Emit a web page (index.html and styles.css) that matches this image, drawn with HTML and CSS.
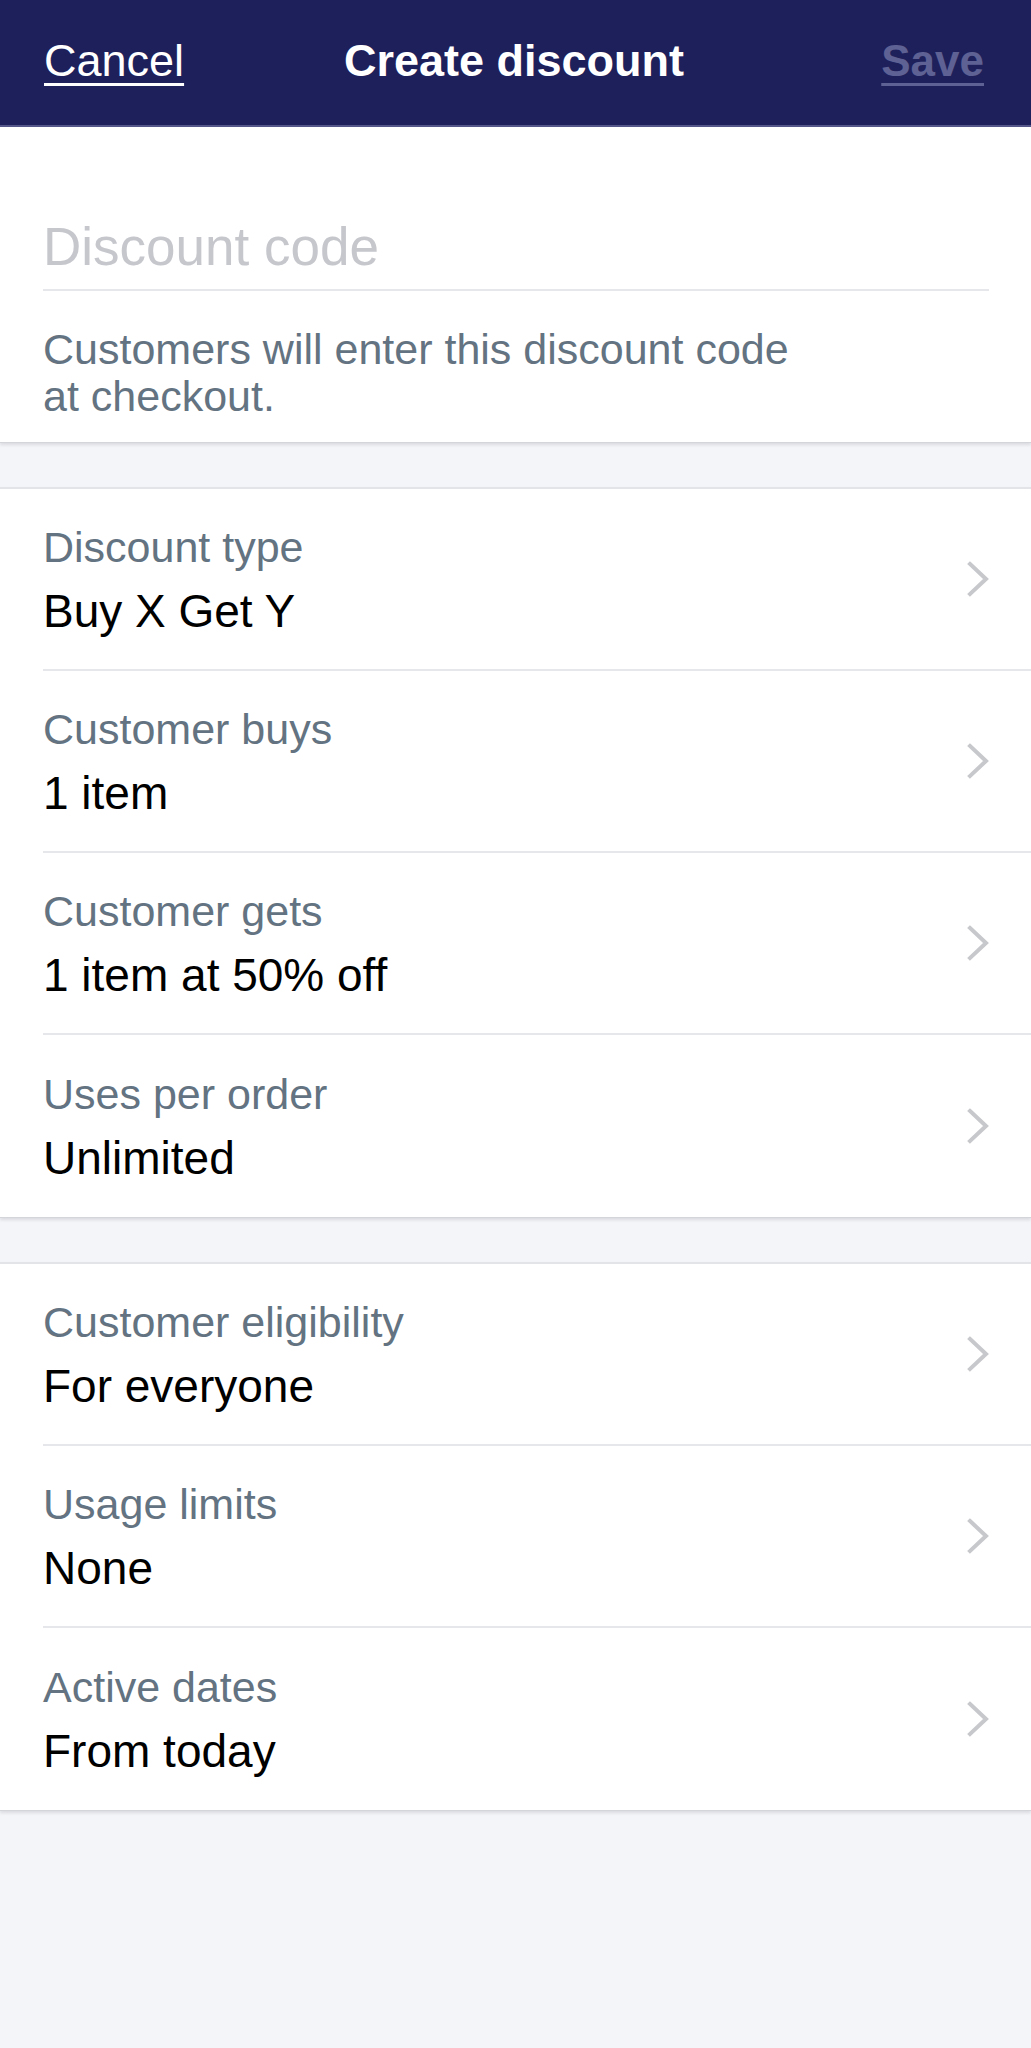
FILE: index.html
```html
<!DOCTYPE html>
<html lang="en">
<head>
<meta charset="utf-8">
<title>Create discount</title>
<link rel="stylesheet" href="styles.css">
</head>
<body>
<header class="topbar">
  <a class="nav-btn cancel" href="#">Cancel</a>
  <h1 class="title">Create discount</h1>
  <a class="nav-btn save" href="#">Save</a>
</header>

<section class="card code-card">
  <div class="code-input">Discount code</div>
  <p class="help">Customers will enter this discount code at checkout.</p>
</section>

<section class="card list">
  <div class="row"><div class="row-inner"><div class="texts"><div class="label">Discount type</div><div class="value">Buy X Get Y</div></div><svg class="chev" viewBox="0 0 22 36"><polyline points="3,3 19,18 3,33"/></svg></div></div>
  <div class="row"><div class="row-inner"><div class="texts"><div class="label">Customer buys</div><div class="value">1 item</div></div><svg class="chev" viewBox="0 0 22 36"><polyline points="3,3 19,18 3,33"/></svg></div></div>
  <div class="row"><div class="row-inner"><div class="texts"><div class="label">Customer gets</div><div class="value">1 item at 50% off</div></div><svg class="chev" viewBox="0 0 22 36"><polyline points="3,3 19,18 3,33"/></svg></div></div>
  <div class="row"><div class="row-inner"><div class="texts"><div class="label">Uses per order</div><div class="value">Unlimited</div></div><svg class="chev" viewBox="0 0 22 36"><polyline points="3,3 19,18 3,33"/></svg></div></div>
</section>

<section class="card list">
  <div class="row"><div class="row-inner"><div class="texts"><div class="label">Customer eligibility</div><div class="value">For everyone</div></div><svg class="chev" viewBox="0 0 22 36"><polyline points="3,3 19,18 3,33"/></svg></div></div>
  <div class="row"><div class="row-inner"><div class="texts"><div class="label">Usage limits</div><div class="value">None</div></div><svg class="chev" viewBox="0 0 22 36"><polyline points="3,3 19,18 3,33"/></svg></div></div>
  <div class="row"><div class="row-inner"><div class="texts"><div class="label">Active dates</div><div class="value">From today</div></div><svg class="chev" viewBox="0 0 22 36"><polyline points="3,3 19,18 3,33"/></svg></div></div>
</section>
</body>
</html>
```

FILE: styles.css
```css
* { box-sizing: border-box; }

html, body {
  margin: 0;
  padding: 0;
}

body {
  background: #f4f5f8;
  font-family: "Liberation Sans", Arial, sans-serif;
  min-height: 2048px;
}

.topbar {
  height: 127px;
  background: #1e205b;
  border-bottom: 2px solid #55578a;
  display: grid;
  grid-template-columns: 1fr auto 1fr;
  align-items: center;
  padding: 0 47px 4px 44px;
}

.nav-btn {
  font-size: 45px;
  text-decoration: underline;
  text-decoration-thickness: 3px;
  text-underline-offset: 7px;
}

.cancel {
  color: #ffffff;
  justify-self: start;
}

.save {
  color: #5e6193;
  font-weight: bold;
  font-size: 44px;
  justify-self: end;
}

.title {
  margin: 0;
  color: #ffffff;
  font-size: 45px;
  font-weight: bold;
}

.card {
  background: #ffffff;
  border-bottom: 1px solid #d3d5db;
  box-shadow: 0 2px 3px rgba(60, 66, 90, 0.14);
}

.code-card {
  padding: 0 42px 22px 43px;
}

.code-input {
  padding-top: 90px;
  padding-bottom: 12px;
  font-size: 53px;
  line-height: 60px;
  color: #c6c7cd;
  border-bottom: 2px solid #e6e7ea;
}

.help {
  margin: 35px 0 0 0;
  max-width: 760px;
  font-size: 43px;
  line-height: 47px;
  color: #637381;
}

.list {
  margin-top: 44px;
  border-top: 2px solid #e2e4e8;
}

.row {
  padding-left: 43px;
}

.row-inner {
  height: 182px;
  border-bottom: 2px solid #e6e7ea;
  display: flex;
  align-items: center;
  justify-content: space-between;
  padding-right: 42px;
}

.row:last-child .row-inner {
  border-bottom: none;
}

.texts {
  padding-top: 2px;
}

.label {
  font-size: 43px;
  line-height: 50px;
  color: #637381;
}

.value {
  margin-top: 11px;
  font-size: 46px;
  line-height: 56px;
  color: #000000;
}

.chev {
  width: 22px;
  height: 36px;
  fill: none;
  stroke: #c7c8cc;
  stroke-width: 4;
  stroke-linecap: square;
}
```
